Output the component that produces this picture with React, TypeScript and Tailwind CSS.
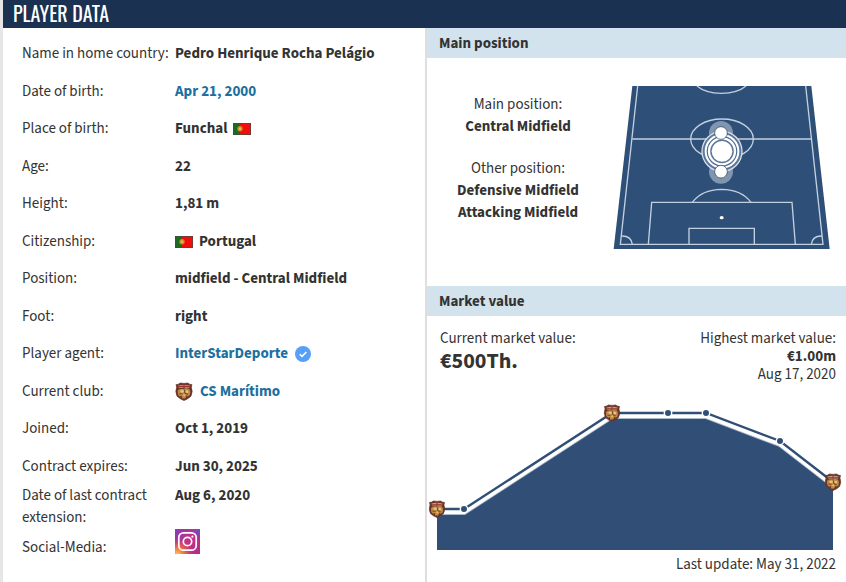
import type { ReactNode } from 'react'

const points = [
  { x: 10, y: 109, crest: true },
  { x: 37, y: 109, crest: false },
  { x: 185, y: 13, crest: true },
  { x: 241, y: 13, crest: false },
  { x: 279, y: 13, crest: false },
  { x: 353, y: 41, crest: false },
  { x: 406, y: 82, crest: true },
]

function PortugalFlag() {
  return (
    <svg className="h-3 w-[18px] shrink-0" viewBox="0 0 18 12" role="img" aria-label="Portugal">
      <rect width="18" height="12" fill="#f20d0d" />
      <rect width="7" height="12" fill="#1c6b20" />
      <circle cx="7" cy="5.8" r="2.7" fill="#c98a2b" />
      <circle cx="7" cy="5.8" r="1.3" fill="#eab964" />
      <rect x="0.5" y="0.5" width="17" height="11" fill="none" stroke="#4a4a40" strokeOpacity="0.75" />
    </svg>
  )
}

function CrestShape() {
  return (
    <g>
      <path d="M1 2.5Q3.5 2.4 5 1Q8.5 1.800 12 1Q13.500 2.400 16 2.500L15.400 5Q17.200 9 15 13.500Q12.500 16 8.500 17.500Q4.500 16 2 13.500Q-0.200 9 1.600 5Z" fill="#6b3527" stroke="#64342a" strokeWidth="0.7" />
      <path d="M3 3.400Q8.500 2.300 14 3.400L13.400 5.400H3.600Z" fill="#c99f84" />
      <path d="M7.900 1.500H9.100V5.600H7.900ZM3 3.900H14V4.700H3Z" fill="#9c3430" />
      <path d="M2.500 8Q4.500 5.600 8 6.600Q10.500 5.400 13.500 6.600Q15.200 9 14 12.400L12 13.800L11.200 12.500L9.500 15.600L6.500 15.400L6.600 13L4.600 13.800L2.800 12Z" fill="#bf8b45" />
      <path d="M4.600 8.200L7.500 7.400L8.700 9.200L6 10.400ZM10 7.800L12.600 8.200L12.200 10.500L9.800 10ZM7.500 12L9.600 11.400L8.800 14Z" fill="#e6c684" />
      <path d="M4 11.200L7 11.200M9 7.400L9.300 10.600L12.300 11.800" fill="none" stroke="#5a3020" strokeWidth="0.8" />
    </g>
  )
}

function ClubCrest() {
  return (
    <svg className="h-[19px] w-[18px] shrink-0" viewBox="0 0 17 18" aria-hidden="true">
      <CrestShape />
    </svg>
  )
}

function VerifiedBadge() {
  return (
    <svg className="size-4 shrink-0" viewBox="0 0 16 16" role="img" aria-label="Verified">
      <circle cx="8" cy="8" r="8" fill="#57a0f8" />
      <path d="M4.700 8.300L7 10.400L11.400 6" fill="none" stroke="#fff" strokeWidth="1.500" />
    </svg>
  )
}

function InstagramIcon() {
  return (
    <svg className="size-[25px]" viewBox="0 0 25 25" aria-hidden="true">
      <defs>
        <linearGradient id="instaBase" x1="0" y1="0.200" x2="1" y2="0.800">
          <stop offset="0" stopColor="#8d3ab4" />
          <stop offset="0.550" stopColor="#c72f81" />
          <stop offset="1" stopColor="#b22c8e" />
        </linearGradient>
        <radialGradient id="instaWarm" cx="0.100" cy="1" r="0.650">
          <stop offset="0" stopColor="#fdc04f" />
          <stop offset="0.500" stopColor="#f06a45" stopOpacity="0.850" />
          <stop offset="1" stopColor="#d9306f" stopOpacity="0" />
        </radialGradient>
        <radialGradient id="instaCool" cx="1" cy="0" r="0.450">
          <stop offset="0" stopColor="#4c5fd7" />
          <stop offset="1" stopColor="#7b3fc0" stopOpacity="0" />
        </radialGradient>
      </defs>
      <rect width="25" height="25" fill="url(#instaBase)" />
      <rect width="25" height="25" fill="url(#instaWarm)" />
      <rect width="25" height="25" fill="url(#instaCool)" />
      <rect x="3.800" y="3.800" width="17.400" height="17.400" rx="4.800" fill="none" stroke="#fff" strokeWidth="1.700" />
      <circle cx="12.500" cy="12.500" r="4.200" fill="none" stroke="#fff" strokeWidth="1.700" />
      <circle cx="17.400" cy="7.700" r="1.100" fill="#fff" />
    </svg>
  )
}

function Pitch() {
  return (
    <svg className="h-[163px] w-[217px] shrink-0" viewBox="39 33 651 489" role="img" aria-label="Positions on the pitch">
      <path d="M97 33H634L689 522H41Z" fill="#2d4f78" />
      <g fill="none" stroke="#c3d0df" strokeWidth="4">
        <path d="M113 33L61 508H669L617 33" />
        <path d="M97 192H635" />
        <path d="M291 33Q315 54 364 55Q414 54 438 33" />
        <ellipse cx="366" cy="192" rx="94" ry="60" />
        <path d="M145 508L155 382H576L586 508" />
        <path d="M267 508V460H463V508" />
        <path d="M277 382Q305 344 365 343Q425 344 453 382" />
        <path d="M64 483Q94 482 97 508M666 483Q637 482 634 508" />
      </g>
      <ellipse cx="365" cy="428" rx="6" ry="5" fill="#fff" />
      <circle cx="363" cy="174" r="36" fill="#fff" fillOpacity="0.400" />
      <circle cx="363" cy="290" r="36" fill="#fff" fillOpacity="0.400" />
      <circle cx="366" cy="229" r="60" fill="#5d789a" stroke="#d7e0e9" strokeWidth="4" />
      <circle cx="366" cy="229" r="49" fill="#4c6a90" stroke="#fff" strokeWidth="6" />
      <circle cx="366" cy="229" r="39" fill="#5d789a" stroke="#fff" strokeWidth="7" />
      <circle cx="366" cy="229" r="31" fill="#fff" />
      <circle cx="363" cy="174" r="19" fill="#fff" stroke="#1c3658" strokeWidth="2" />
      <circle cx="363" cy="290" r="19" fill="#fff" stroke="#1c3658" strokeWidth="2" />
    </svg>
  )
}

function ValueChart() {
  const line = points.map((p) => `${p.x},${p.y}`).join(' ')
  return (
    <svg className="block w-full" viewBox="0 0 419 152" role="img" aria-label="Market value over time">
      <defs>
        <clipPath id="chartArea">
          <path d={`M${line} L406,150 L10,150 Z`} />
        </clipPath>
      </defs>
      <g clipPath="url(#chartArea)">
        <rect width="419" height="152" fill="#314f76" />
        <polyline points={line} transform="translate(0 3)" fill="none" stroke="#a9b8cb" strokeWidth="6" />
        <polyline points={line} transform="translate(0 2)" fill="none" stroke="#fff" strokeWidth="6" />
      </g>
      <polyline points={line} fill="none" stroke="#314f76" strokeWidth="2.400" />
      {points.map((p) =>
        p.crest ? (
          <g key={p.x} transform={`translate(${p.x - 8.5} ${p.y - 9})`}>
            <CrestShape />
          </g>
        ) : (
          <circle key={p.x} cx={p.x} cy={p.y} r="3.700" fill="#314f76" stroke="#fff" strokeWidth="1.400" />
        ),
      )}
    </svg>
  )
}

function Row({ label, children }: { label: string; children: ReactNode }) {
  return (
    <div className="flex items-center odd:h-[38px] even:h-[37px]">
      <dt className="w-[153px] shrink-0 whitespace-nowrap">{label}</dt>
      <dd className="flex items-center font-bold">{children}</dd>
    </div>
  )
}

function PanelHeading({ children }: { children: ReactNode }) {
  return <h3 className="h-[30px] bg-[#d3e3ed] pl-3 font-bold leading-[32px]">{children}</h3>
}

export default function App() {
  return (
    <div className="flex min-h-screen flex-col border-l-[3px] border-[#e6e6e6] bg-white font-['Source_Sans_Pro','Source_Sans_3','Noto_Sans_CJK_SC',sans-serif] text-[15px] leading-[22px] text-[#333]">
      <h2 className="h-7 bg-[#1b3151] pl-[10px] font-['Oswald','Roboto_Condensed','Open_Sans_Condensed','Noto_Sans_CJK_SC',sans-serif] text-xl leading-[26px] text-white">
        PLAYER DATA
      </h2>

      <div className="grid flex-1 grid-cols-[422fr_421fr]">
        <dl className="pl-[19px] pt-[7px]">
          <Row label="Name in home country:">Pedro Henrique Rocha Pelágio</Row>
          <Row label="Date of birth:">
            <a href="#birthday" className="text-[#1d6f9f]">Apr 21, 2000</a>
          </Row>
          <Row label="Place of birth:">
            <span className="mr-[6px]">Funchal</span>
            <PortugalFlag />
          </Row>
          <Row label="Age:">22</Row>
          <Row label="Height:">1,81 m</Row>
          <Row label="Citizenship:">
            <PortugalFlag />
            <span className="ml-[6px]">Portugal</span>
          </Row>
          <Row label="Position:">midfield - Central Midfield</Row>
          <Row label="Foot:">right</Row>
          <Row label="Player agent:">
            <a href="#agent" className="mr-[7px] text-[#1d6f9f]">InterStarDeporte</a>
            <VerifiedBadge />
          </Row>
          <Row label="Current club:">
            <ClubCrest />
            <a href="#club" className="ml-[7px] text-[#1d6f9f]">CS Marítimo</a>
          </Row>
          <Row label="Joined:">Oct 1, 2019</Row>
          <Row label="Contract expires:">Jun 30, 2025</Row>
          <div className="flex">
            <dt className="w-[153px] shrink-0 pr-5">Date of last contract extension:</dt>
            <dd className="font-bold">Aug 6, 2020</dd>
          </div>
          <div className="flex items-start">
            <dt className="w-[153px] shrink-0 pt-2">Social-Media:</dt>
            <dd>
              <a href="#instagram" aria-label="Instagram" className="block">
                <InstagramIcon />
              </a>
            </dd>
          </div>
        </dl>

        <div className="border-l-2 border-[#dedede]">
          <section>
            <PanelHeading>Main position</PanelHeading>
            <div className="flex h-[228px] items-start justify-between pr-4 pt-7">
              <div className="flex-1 pr-1 pt-2 text-center">
                <p>Main position:</p>
                <p className="font-bold">Central Midfield</p>
                <p className="mt-5">Other position:</p>
                <p className="font-bold">Defensive Midfield</p>
                <p className="font-bold">Attacking Midfield</p>
              </div>
              <Pitch />
            </div>
          </section>

          <section>
            <PanelHeading>Market value</PanelHeading>
            <div className="flex justify-between pb-4 pl-[13px] pr-[10px] pt-3">
              <div>
                <p>Current market value:</p>
                <p className="text-[22px] leading-[22px] font-bold">€500Th.</p>
              </div>
              <div className="text-right leading-[18px]">
                <p className="pt-[2px]">Highest market value:</p>
                <p className="font-bold">€1.00m</p>
                <p>Aug 17, 2020</p>
              </div>
            </div>
            <ValueChart />
            <p className="pr-[10px] pt-[2px] text-right">Last update: May 31, 2022</p>
          </section>
        </div>
      </div>
    </div>
  )
}
